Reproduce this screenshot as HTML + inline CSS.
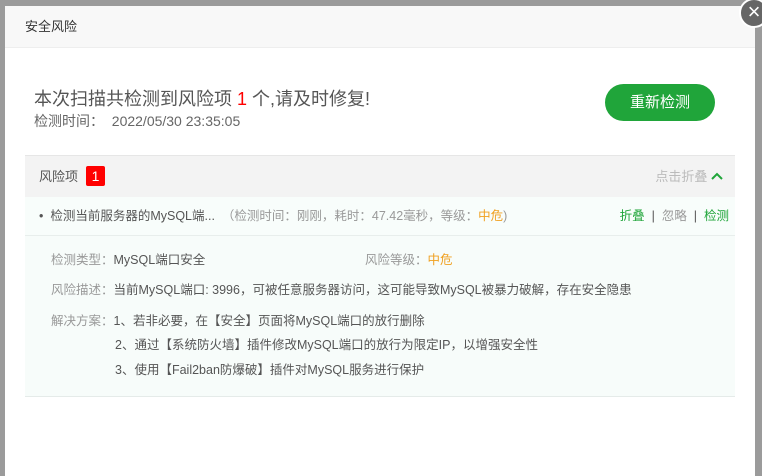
<!DOCTYPE html>
<html><head><meta charset="utf-8"><style>
*{margin:0;padding:0;box-sizing:border-box}
body{width:762px;height:463px;background:#9b9b9b;font-family:"Liberation Sans","Noto Sans CJK SC",sans-serif;position:relative;overflow:hidden}
.dlg{position:absolute;left:5px;top:6px;width:750px;height:470px;background:#fff}
.hd{height:42px;background:#f8f8f8;border-bottom:1px solid #eee;font-size:13px;color:#333;line-height:42px;padding-left:20px}
.close{position:absolute;left:734px;top:-8px;width:30px;height:30px;border-radius:50%;background:#666;border:2px solid #fff;color:#fff;font-size:22px;line-height:24px;text-align:center}
.t1{position:absolute;left:29px;top:79px;font-size:18px;color:#555}
.t2{position:absolute;left:29px;top:105px;font-size:14px;color:#666}
.btn{position:absolute;left:600px;top:78px;width:110px;height:37px;border-radius:19px;background:#20a53a;color:#fff;font-size:15px;text-align:center;line-height:37px}
.sec{position:absolute;left:20px;top:149px;width:710px}
.sh{height:42px;background:#f3f3f3;border-top:1px solid #e6e6e6;font-size:13px;color:#555;line-height:41px;padding-left:14px;position:relative}
.badge{display:inline-block;background:#f00;color:#fff;width:19px;height:20px;line-height:20px;text-align:center;border-radius:2px;margin-left:8px;font-size:14px;vertical-align:middle;margin-top:-3px}
.fold{position:absolute;right:12px;top:0;color:#bbb}
.row{height:39px;background:#f8fdfb;border-bottom:1px solid #e8eeec;font-size:12.5px;line-height:38px;padding-left:14px;color:#555;position:relative}
.gr{color:#999}.or{color:#f0a020}.g{color:#20a53a}
.acts{position:absolute;right:6px;top:0}
.det{height:161px;background:#f7fcfa;border-bottom:1px solid #e5ebe9;position:relative;font-size:12.5px;color:#555}
.det div{position:absolute;white-space:nowrap}
.l{color:#999}
</style></head><body>
<div class="dlg">
<div class="hd">安全风险</div>
<div class="close">×</div>
<div class="t1">本次扫描共检测到风险项 <span style="color:#f00">1</span> 个,请及时修复!</div>
<div class="t2">检测时间：&nbsp; 2022/05/30 23:35:05</div>
<div class="btn">重新检测</div>
<div class="sec">
<div class="sh">风险项<span class="badge">1</span><span class="fold">点击折叠 <svg width="12" height="10" viewBox="0 0 12 10" style="vertical-align:0px"><path d="M1 8 L6 3 L11 8" fill="none" stroke="#20a53a" stroke-width="2"/></svg></span></div>
<div class="row">•&nbsp; 检测当前服务器的MySQL端... <span class="gr">&nbsp;（检测时间：刚刚，耗时：47.42毫秒，等级：</span><span class="or">中危</span><span class="gr">)</span><span class="acts"><span class="g">折叠</span> &nbsp;|&nbsp; <span class="gr">忽略</span> &nbsp;|&nbsp; <span class="g">检测</span></span></div>
<div class="det">
<div style="left:26px;top:13px"><span class="l">检测类型：</span>MySQL端口安全</div>
<div style="left:340px;top:13px"><span class="l">风险等级：</span><span class="or">中危</span></div>
<div style="left:26px;top:43px"><span class="l">风险描述：</span>当前MySQL端口: 3996，可被任意服务器访问，这可能导致MySQL被暴力破解，存在安全隐患</div>
<div style="left:26px;top:74px"><span class="l">解决方案：</span>1、若非必要，在【安全】页面将MySQL端口的放行删除</div>
<div style="left:90px;top:98px">2、通过【系统防火墙】插件修改MySQL端口的放行为限定IP，以增强安全性</div>
<div style="left:90px;top:123px">3、使用【Fail2ban防爆破】插件对MySQL服务进行保护</div>
</div>
</div>
</div>
</body></html>
